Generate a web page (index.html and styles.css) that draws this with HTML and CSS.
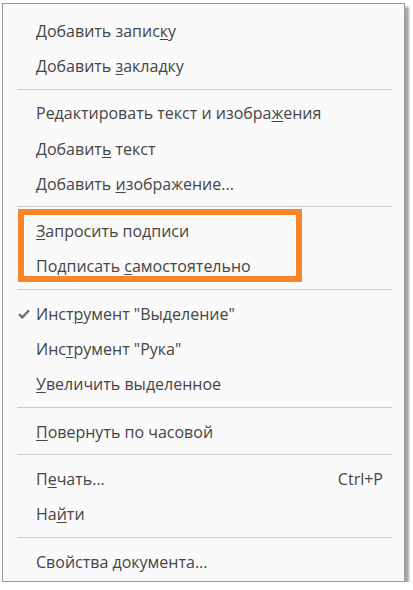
FILE: index.html
```html
<!DOCTYPE html>
<html lang="ru">
<head>
<meta charset="utf-8">
<link rel="stylesheet" href="styles.css">
</head>
<body>
<div class="menu">
  <div class="item"><span>Добавить запис<u>к</u>у</span></div>
  <div class="item"><span>Добавить <u>з</u>акладку</span></div>
  <div class="sep"></div>
  <div class="item"><span>Редактировать текст и изобра<u>ж</u>ения</span></div>
  <div class="item"><span>Добавит<u>ь</u> текст</span></div>
  <div class="item"><span>Добавить <u>и</u>зображение...</span></div>
  <div class="sep"></div>
  <div class="group">
    <div class="item"><span><u>З</u>апросить подписи</span></div>
    <div class="item"><span>Подписать <u>с</u>амостоятельно</span></div>
    <div class="highlight"></div>
  </div>
  <div class="sep"></div>
  <div class="item">
    <svg class="check" viewBox="0 0 12 10" width="12" height="10"><path d="M1 5.2 L4.3 8.4 L11 1.4" fill="none" stroke="#707070" stroke-width="2.3"/></svg>
    <span>Инст<u>р</u>умент "Выделение"</span>
  </div>
  <div class="item"><span>Инс<u>т</u>румент "Рука"</span></div>
  <div class="item"><span><u>У</u>величить выделенное</span></div>
  <div class="sep"></div>
  <div class="item"><span><u>П</u>овернуть по часовой</span></div>
  <div class="sep"></div>
  <div class="item"><span>П<u>е</u>чать...</span><span class="shortcut">Ctrl+P</span></div>
  <div class="item"><span>На<u>й</u>ти</span></div>
  <div class="sep"></div>
  <div class="item"><span>Свойства <u>д</u>окумента...</span></div>
</div>
</body>
</html>
```
FILE: styles.css
```css
html, body {
  margin: 0;
  padding: 0;
  background: #ffffff;
}
body {
  font-family: "Open Sans", "Noto Sans", "DejaVu Sans", sans-serif;
  font-size: 16px;
  color: #454545;
}
.menu {
  margin: 3px 0 0 2px;
  width: 403px;
  height: 579px;
  box-sizing: border-box;
  background: #fafafa;
  border: 1px solid #9a9a9a;
  box-shadow: 4px 4px 2px rgba(0, 0, 0, 0.35);
  padding-top: 9px;
}
.item {
  position: relative;
  height: 35.3px;
  display: flex;
  align-items: center;
  padding-left: 33px;
  padding-right: 21px;
  white-space: pre;
}
.item u {
  text-decoration-thickness: 1px;
  text-underline-offset: 2px;
}
.shortcut {
  margin-left: auto;
}
.check {
  position: absolute;
  left: 15px;
  top: 13px;
}
.sep {
  height: 1px;
  background: #cccccc;
  margin: 5px 12px 6px 14px;
}
.group {
  position: relative;
}
.highlight {
  position: absolute;
  left: 15px;
  top: -4px;
  width: 284px;
  height: 73px;
  box-sizing: border-box;
  border: 6px solid #f7862a;
}
```
